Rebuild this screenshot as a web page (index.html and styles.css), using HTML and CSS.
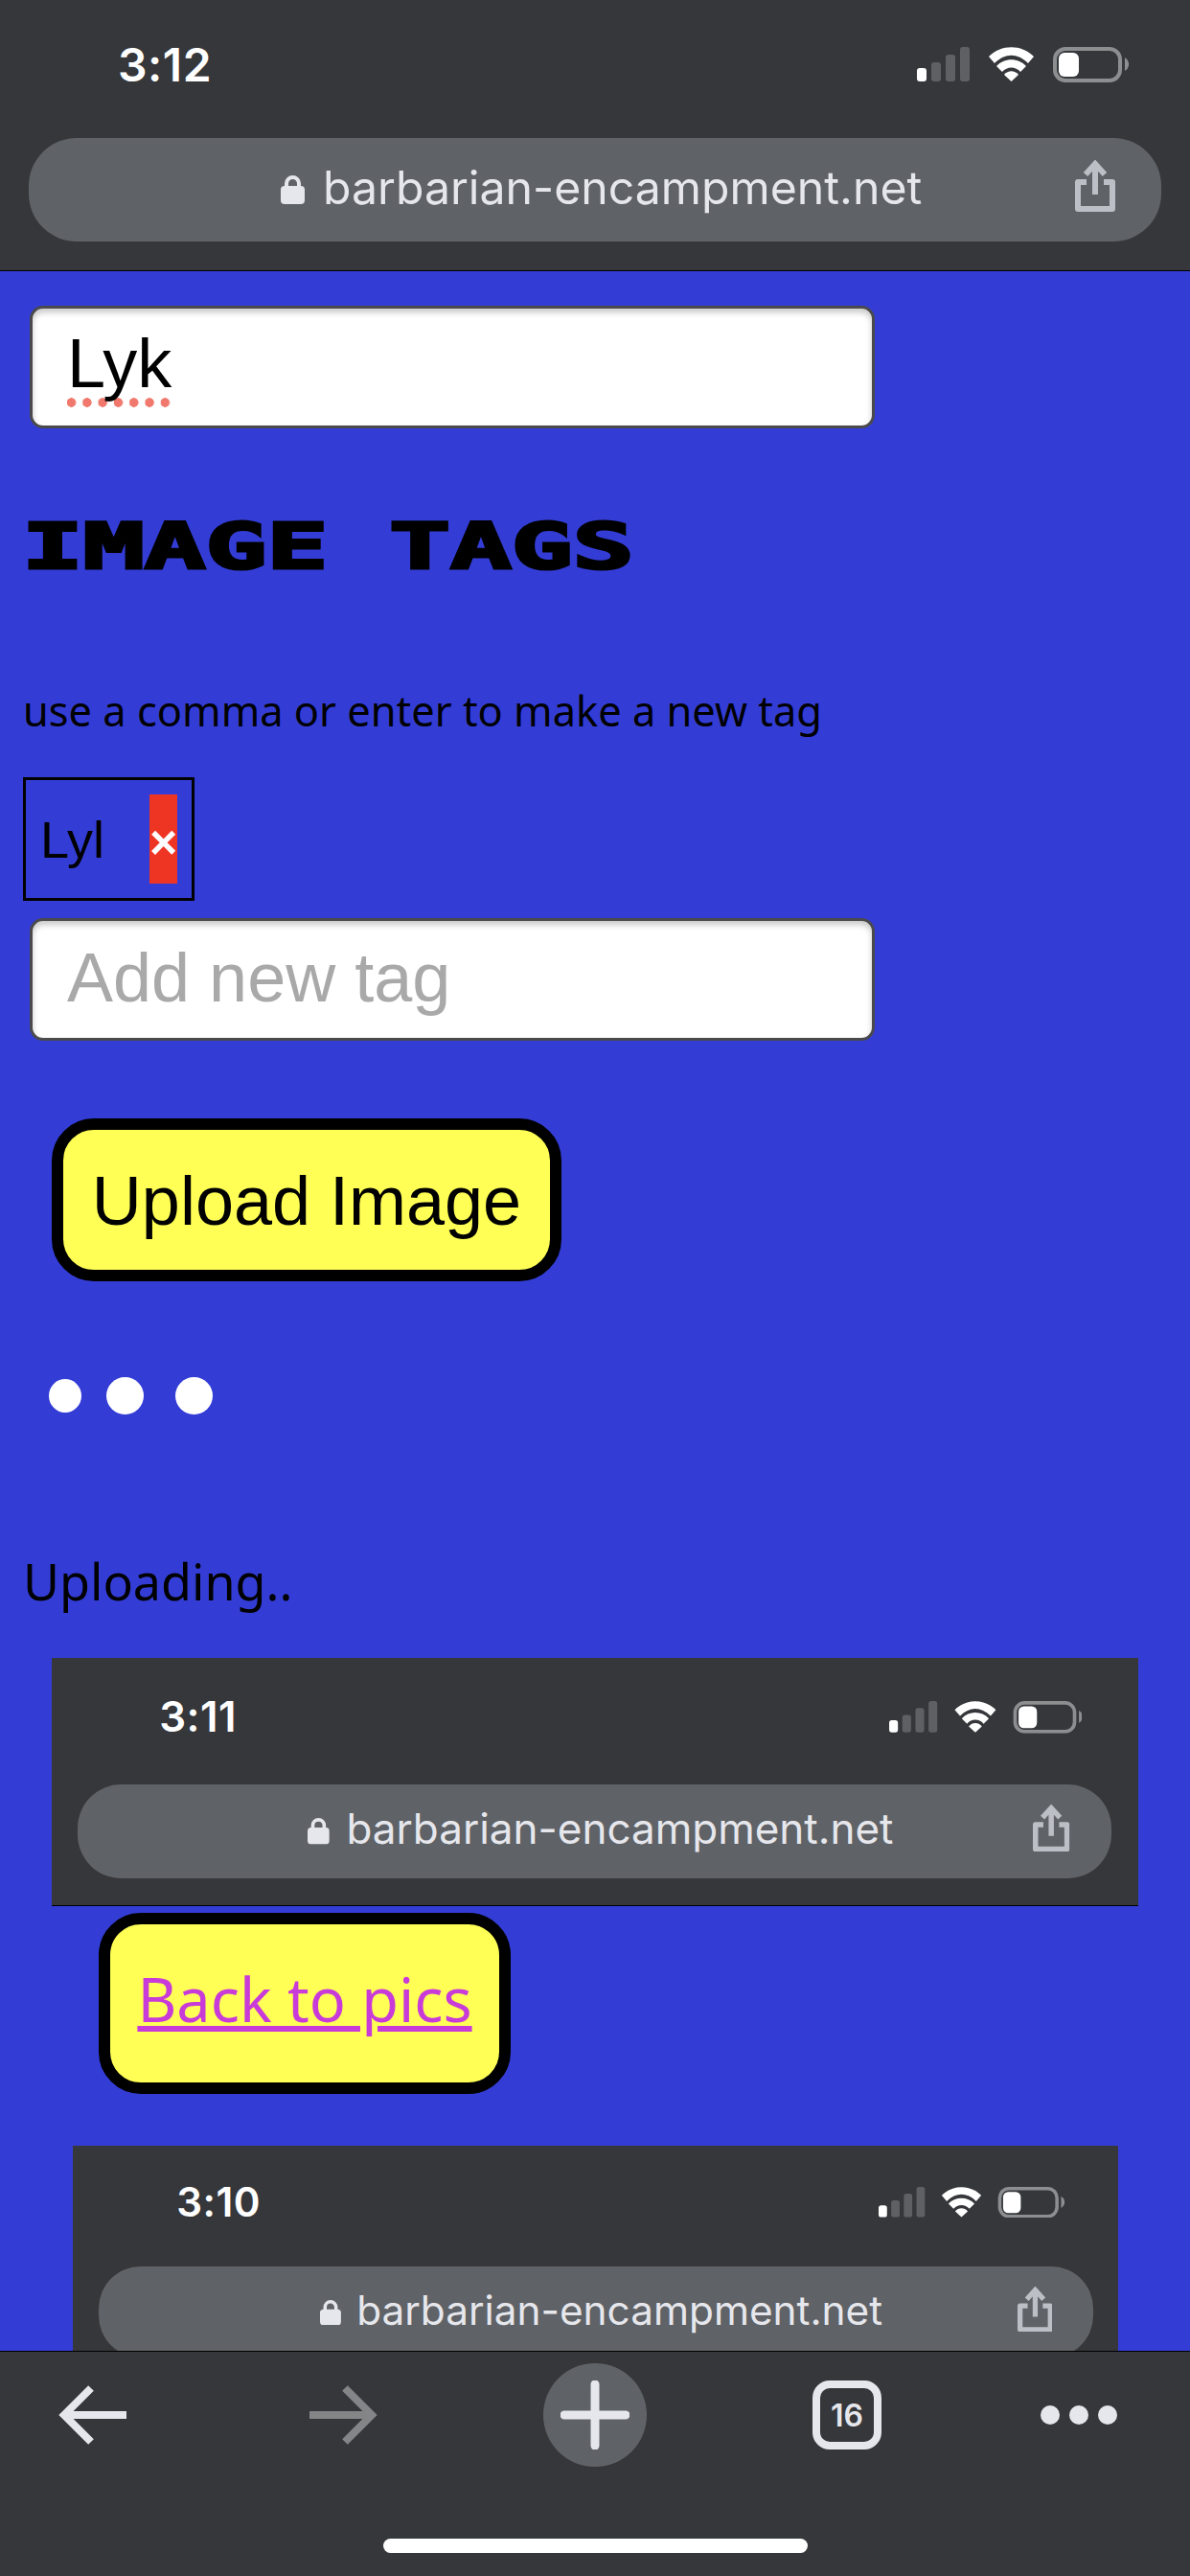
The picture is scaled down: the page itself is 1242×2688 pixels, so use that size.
FILE: index.html
```html
<!DOCTYPE html>
<html lang="en">
<head>
    <meta charset="UTF-8">
    <meta name="viewport" content="width=device-width, initial-scale=1.0">
    <title>barbarian-encampment.net</title>
    <link rel="stylesheet" href="styles.css">
</head>
<body>
    <svg class="defs" width="0" height="0">
        <symbol id="status-icons" viewBox="0 0 221 37">
            <rect x="0" y="22" width="10" height="14" rx="3" fill="#fff"/>
            <rect x="15" y="16" width="10" height="20" rx="3" fill="#5f6064"/>
            <rect x="30" y="8" width="10" height="28" rx="3" fill="#5f6064"/>
            <rect x="45" y="0" width="10" height="36" rx="3" fill="#5f6064"/>
            <path d="M75 10C88 -3 109 -3 122 10L116 17C105 6 92 6 81 17Z" fill="#fff"/>
            <path d="M83 20C91 11 106 11 114 20L108 26C103 20 94 20 89 26Z" fill="#fff"/>
            <path d="M91 29C95 24 102 24 106 29L98.5 36Z" fill="#fff"/>
            <rect x="144" y="2" width="68" height="33" rx="11" fill="none" stroke="#8d8e90" stroke-width="4"/>
            <rect x="148" y="6" width="21" height="25" rx="6" fill="#fff"/>
            <path d="M217 11a8 8 0 0 1 0 14Z" fill="#8d8e90"/>
        </symbol>
        <symbol id="lock" viewBox="0 0 25 30">
            <rect x="0" y="11" width="25" height="19" rx="4" fill="#e6e7ec"/>
            <path d="M6 13V8.500a6.500 6.500 0 0 1 13 0V13" fill="none" stroke="#e6e7ec" stroke-width="4"/>
        </symbol>
        <symbol id="share" viewBox="0 0 42 54">
            <path d="M12 23H3V51H39V23H30" fill="none" stroke="#bcbfc5" stroke-width="6" stroke-linejoin="round"/>
            <path d="M21 36V5M11 15L21 4L31 15" fill="none" stroke="#bcbfc5" stroke-width="6"/>
        </symbol>
    </svg>

    <header class="browser-bar">
        <div class="status">
            <span class="time">3:12</span>
            <svg class="status-icons"><use href="#status-icons"/></svg>
        </div>
        <div class="url-bar">
            <svg class="lock"><use href="#lock"/></svg>
            <span class="url">barbarian-encampment.net</span>
            <svg class="share"><use href="#share"/></svg>
        </div>
    </header>

    <main class="page">
        <div class="text-input title-input"><span class="misspelled">Lyk</span></div>

        <h2 class="section-title">IMAGE TAGS</h2>
        <p class="hint">use a comma or enter to make a new tag</p>

        <div class="tag">
            <span class="tag-name">Lyl</span>
            <button class="tag-remove">×</button>
        </div>
        <input class="text-input tag-input" type="text" placeholder="Add new tag">

        <button class="upload">Upload Image</button>

        <div class="loader">
            <span class="dot"></span>
            <span class="dot big"></span>
            <span class="dot big"></span>
        </div>

        <p class="uploading">Uploading..</p>

        <div class="shot shot-first">
            <div class="browser-bar">
                <div class="status">
                    <span class="time">3:11</span>
                    <svg class="status-icons"><use href="#status-icons"/></svg>
                </div>
                <div class="url-bar">
                    <svg class="lock"><use href="#lock"/></svg>
                    <span class="url">barbarian-encampment.net</span>
                    <svg class="share"><use href="#share"/></svg>
                </div>
            </div>
        </div>

        <div class="back-button"><a href="#">Back to pics</a></div>

        <div class="shot shot-second">
            <div class="browser-bar">
                <div class="status">
                    <span class="time">3:10</span>
                    <svg class="status-icons"><use href="#status-icons"/></svg>
                </div>
                <div class="url-bar">
                    <svg class="lock"><use href="#lock"/></svg>
                    <span class="url">barbarian-encampment.net</span>
                    <svg class="share"><use href="#share"/></svg>
                </div>
            </div>
        </div>
    </main>

    <footer class="toolbar">
        <div class="toolbar-row">
            <svg class="nav-back" width="71" height="62" viewBox="0 0 71 62">
                <path d="M71 31H6M34 3L6 31L34 59" fill="none" stroke="#e6e7ec" stroke-width="8"/>
            </svg>
            <svg class="nav-forward" width="72" height="62" viewBox="0 0 72 62">
                <path d="M0 31H65M37 3L65 31L37 59" fill="none" stroke="#848587" stroke-width="8"/>
            </svg>
            <div class="nav-new">
                <svg width="72" height="72" viewBox="0 0 72 72">
                    <path d="M36 4V68M4 36H68" fill="none" stroke="#e6e7ec" stroke-width="9" stroke-linecap="round"/>
                </svg>
            </div>
            <div class="nav-tabs">16</div>
            <div class="nav-more">
                <span></span>
                <span></span>
                <span></span>
            </div>
        </div>
        <div class="home-indicator"></div>
    </footer>
</body>
</html>
```

FILE: styles.css
```css
* {
    box-sizing: border-box;
}

html, body {
    margin: 0;
    padding: 0;
}

body {
    display: flex;
    flex-direction: column;
    width: 1242px;
    height: 2688px;
    overflow: hidden;
    font-family: "Liberation Sans", Arial, sans-serif;
    background-color: #333dd6;
}

.defs {
    position: absolute;
}

/* browser chrome, also used inside the uploaded screenshots */
.browser-bar {
    flex: none;
    height: 283px;
    padding-top: 49px;
    background-color: #36373b;
    border-bottom: 1px solid #000;
}

.status {
    display: flex;
    justify-content: space-between;
    align-items: center;
    height: 37px;
    padding: 0 64px 0 123px;
}

.time {
    font-family: Inter, sans-serif;
    font-size: 48px;
    font-weight: 600;
    line-height: 37px;
    letter-spacing: 0.5px;
    color: #fff;
}

.status-icons {
    width: 221px;
    height: 37px;
}

.url-bar {
    display: flex;
    align-items: center;
    height: 108px;
    margin: 58px 30px 0;
    padding: 0 48px 0 263px;
    background-color: #5f6266;
    border-radius: 50px;
}

.lock {
    width: 25px;
    height: 30px;
    margin-right: 19px;
}

.url {
    margin-bottom: 6px;
    font-family: Inter, sans-serif;
    font-size: 48.200px;
    color: #e6e7ec;
}

.share {
    width: 42px;
    height: 54px;
    margin-left: auto;
    margin-bottom: 8px;
}

.page {
    flex: 1;
    min-height: 0;
    overflow: hidden;
}

.text-input {
    display: block;
    width: 882px;
    height: 128px;
    margin-left: 31px;
    padding: 0 0 0 36px;
    border: 3px solid #4a4a4c;
    border-radius: 14px;
    background-color: #fff;
    box-shadow: inset 0 4px 6px rgba(0, 0, 0, 0.22);
    font-family: "Liberation Sans", Arial, sans-serif;
    font-size: 72px;
    color: #000;
}

.title-input {
    margin-top: 36px;
    line-height: 114px;
}

.misspelled {
    display: inline-block;
    line-height: 92px;
    background-image: radial-gradient(circle at 4.500px 5px, #f0786c 4.500px, transparent 5px);
    background-size: 16.300px 10px;
    background-repeat: repeat-x;
    background-position: left bottom;
}

.section-title {
    margin: 89px 0 0 23px;
    font-family: "DejaVu Sans Mono", monospace;
    font-size: 66px;
    font-weight: bold;
    line-height: 70px;
    color: #000;
    white-space: nowrap;
    -webkit-text-stroke: 3px #000;
    transform: scaleX(1.607);
    transform-origin: left center;
}

.hint {
    margin: 106px 0 0 24px;
    font-family: "Noto Sans", sans-serif;
    font-size: 43.400px;
    line-height: 60px;
    color: #000;
}

.tag {
    display: flex;
    align-items: center;
    width: 179px;
    height: 129px;
    margin: 39px 0 0 24px;
    padding-left: 15px;
    border: 3px solid #000;
}

.tag-name {
    width: 69px;
    font-size: 54px;
    color: #000;
}

.tag-remove {
    display: block;
    width: 29px;
    height: 93px;
    margin-left: 45px;
    padding: 6px 0 0;
    border: none;
    background-color: #ee3524;
    font-family: "Liberation Sans", Arial, sans-serif;
    font-size: 50px;
    font-weight: bold;
    color: #fff;
}

.tag-input {
    margin-top: 18px;
    padding-bottom: 5px;
}

.tag-input::placeholder {
    color: #a9a9a9;
}

.upload {
    display: block;
    width: 532px;
    height: 170px;
    margin: 81px 0 0 54px;
    padding: 2px 0 0;
    border: 12px solid #000;
    border-radius: 44px;
    background-color: #ffff55;
    font-family: "Liberation Sans", Arial, sans-serif;
    font-size: 72px;
    color: #000;
}

.loader {
    display: flex;
    align-items: center;
    height: 39px;
    margin: 100px 0 0 51px;
}

.dot {
    width: 34px;
    height: 35px;
    margin-right: 26px;
    border-radius: 50%;
    background-color: #fff;
}

.dot.big {
    width: 39px;
    height: 39px;
    margin-right: 33px;
}

.uploading {
    margin: 134px 0 0 24px;
    font-family: "Noto Sans", sans-serif;
    font-size: 52px;
    line-height: 80px;
    color: #000;
}

.shot {
    width: 1242px;
}

.shot-first {
    zoom: 0.913;
    margin: 44px 0 0 59px;
}

.back-button {
    display: flex;
    justify-content: center;
    align-items: center;
    width: 430px;
    height: 189px;
    margin: 7px 0 0 103px;
    padding-bottom: 10px;
    border: 12px solid #000;
    border-radius: 44px;
    background-color: #ffff55;
    font-family: "Noto Sans", sans-serif;
    font-size: 63px;
}

.back-button a {
    color: #c93bd8;
}

.shot-second {
    zoom: 0.878;
    margin: 62px 0 0 87px;
}

.toolbar {
    flex: none;
    height: 235px;
    padding-top: 12px;
    background-color: #36373b;
    border-top: 1px solid #000;
}

.toolbar-row {
    display: flex;
    align-items: center;
    height: 108px;
}

.nav-back {
    margin-left: 61px;
}

.nav-forward {
    margin-left: 191px;
}

.nav-new {
    display: flex;
    justify-content: center;
    align-items: center;
    width: 108px;
    height: 108px;
    margin-left: 172px;
    border-radius: 50%;
    background-color: #5f6266;
}

.nav-tabs {
    display: flex;
    justify-content: center;
    align-items: center;
    width: 72px;
    height: 72px;
    margin-left: 173px;
    border: 8px solid #e6e7ec;
    border-radius: 18px;
    font-family: Inter, sans-serif;
    font-size: 32px;
    font-weight: 600;
    color: #e6e7ec;
}

.nav-more {
    display: flex;
    gap: 10px;
    margin-left: 166px;
}

.nav-more span {
    width: 20px;
    height: 20px;
    border-radius: 50%;
    background-color: #e6e7ec;
}

.home-indicator {
    width: 443px;
    height: 15px;
    margin: 75px auto 0;
    border-radius: 8px;
    background-color: #fff;
}
```
